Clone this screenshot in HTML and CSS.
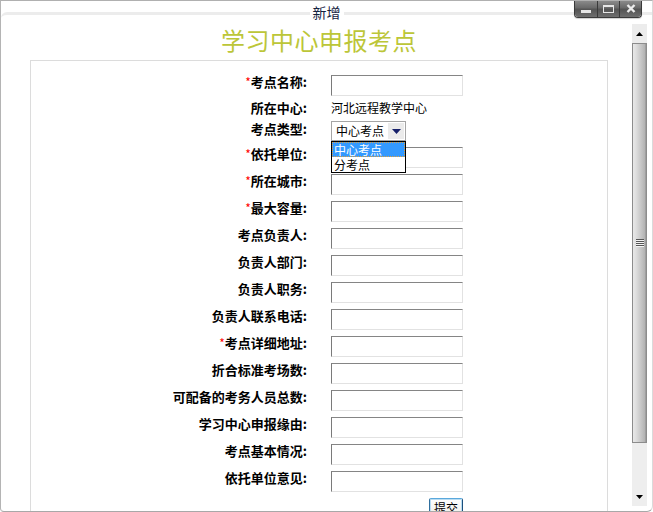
FILE: index.html
```html
<!DOCTYPE html>
<html lang="zh-CN">
<head>
<meta charset="utf-8">
<title>新增</title>
<link rel="stylesheet" href="styles.css">
</head>
<body>
<div class="window">
  <div class="titlebar"><span class="title">新增</span></div>
  <div class="controls">
    <span class="ctl ctl-min"><i class="min-bar"></i></span>
    <span class="ctl ctl-max"><i class="max-box"></i></span>
    <span class="ctl ctl-close"><svg width="10" height="9" viewBox="0 0 10 9"><path d="M1.5 1 L8.5 8 M8.5 1 L1.5 8" stroke="#ececec" stroke-width="2.4" fill="none"/></svg></span>
  </div>
  <div class="frame">
    <div class="content">
      <h1 class="heading">学习中心申报考点</h1>
      <div class="panel">
        <div class="row"><div class="label"><span class="req">*</span>考点名称:</div><div class="field"><span class="input"></span></div></div>
        <div class="row row-text"><div class="label">所在中心:</div><div class="field value">河北远程教学中心</div></div>
        <div class="row row-sel"><div class="label">考点类型:</div>
          <div class="field">
            <div class="select">
              <span class="select-text">中心考点</span>
              <span class="select-btn"><svg width="9" height="5" viewBox="0 0 9 5"><path d="M0 0 H9 L4.5 5 Z" fill="#16206a"/></svg></span>
              <div class="listbox">
                <div class="opt opt-on">中心考点</div>
                <div class="opt">分考点</div>
              </div>
            </div>
          </div>
        </div>
        <div class="row"><div class="label"><span class="req">*</span>依托单位:</div><div class="field"><span class="input"></span></div></div>
        <div class="row"><div class="label"><span class="req">*</span>所在城市:</div><div class="field"><span class="input"></span></div></div>
        <div class="row"><div class="label"><span class="req">*</span>最大容量:</div><div class="field"><span class="input"></span></div></div>
        <div class="row"><div class="label">考点负责人:</div><div class="field"><span class="input"></span></div></div>
        <div class="row"><div class="label">负责人部门:</div><div class="field"><span class="input"></span></div></div>
        <div class="row"><div class="label">负责人职务:</div><div class="field"><span class="input"></span></div></div>
        <div class="row"><div class="label">负责人联系电话:</div><div class="field"><span class="input"></span></div></div>
        <div class="row"><div class="label"><span class="req">*</span>考点详细地址:</div><div class="field"><span class="input"></span></div></div>
        <div class="row"><div class="label">折合标准考场数:</div><div class="field"><span class="input"></span></div></div>
        <div class="row"><div class="label">可配备的考务人员总数:</div><div class="field"><span class="input"></span></div></div>
        <div class="row"><div class="label">学习中心申报缘由:</div><div class="field"><span class="input"></span></div></div>
        <div class="row"><div class="label">考点基本情况:</div><div class="field"><span class="input"></span></div></div>
        <div class="row"><div class="label">依托单位意见:</div><div class="field"><span class="input"></span></div></div>
        <div class="row"><div class="label"></div><div class="field"><div class="btnwrap"><span class="submit">提交</span></div></div></div>
      </div>
    </div>
    <div class="scrollbar">
      <div class="sb-up"><svg width="7" height="4" viewBox="0 0 7 4"><path d="M0 4 H7 L3.5 0 Z" fill="#000"/></svg></div>
      <div class="sb-thumb"><span class="grip"></span></div>
      <div class="sb-track"><svg width="7" height="4" viewBox="0 0 7 4"><path d="M0 0 H7 L3.5 4 Z" fill="#000"/></svg></div>
    </div>
  </div>
</div>
</body>
</html>
```

FILE: styles.css
```css
* { box-sizing: border-box; }
html, body { margin: 0; padding: 0; background: #fff; }
body {
  font-family: "Noto Sans CJK SC", "Liberation Sans", sans-serif;
  font-size: 12px;
  color: #000;
}
.window {
  position: relative;
  width: 653px;
  height: 512px;
  overflow: hidden;
  background: #fff;
  border-top: 1px solid #b0b0b0;
  border-left: 1px solid #b4b4b4;
  border-bottom: 1px solid #a8a8a8;
  border-right: 1px solid #dadada;
  border-bottom-right-radius: 6px;
  border-bottom-left-radius: 4px;
  display: flex;
  flex-direction: column;
}
.titlebar {
  height: 11px;
  flex: none;
  display: flex;
  justify-content: center;
  z-index: 1;
}
.title {
  font-size: 14px;
  line-height: 22px;
  height: 22px;
  color: #15233f;
  background: #fff;
  padding: 0 3px;
}
.controls {
  position: absolute;
  top: -1px;
  right: 10px;
  z-index: 2;
  display: flex;
  border: 1px solid #3a3a3a;
  border-top: none;
  border-radius: 0 0 4px 4px;
  overflow: hidden;
  box-shadow: 0 1px 1px #cfcfcf;
}
.ctl {
  width: 22px;
  height: 17px;
  display: flex;
  align-items: center;
  justify-content: center;
  background: linear-gradient(#8e8e8e, #6a6a6a 45%, #545454 55%, #6e6e6e);
  border-left: 1px solid #3a3a3a;
}
.ctl-min { border-left: none; }
.min-bar {
  display: block;
  width: 10px;
  height: 3px;
  margin-top: 5px;
  background: #e6e6e6;
}
.max-box {
  display: block;
  width: 11px;
  height: 8px;
  border: 1px solid #e6e6e6;
  border-top-width: 2px;
}
.frame {
  flex: 1;
  min-height: 0;
  display: flex;
  border-top: 3px solid #ececec;
  border-top-left-radius: 6px;
}
.content {
  flex: 1;
  min-width: 0;
  padding: 10px 24px 0 29px;
  overflow: hidden;
}
.heading {
  margin: 0 0 5px;
  font-size: 24px;
  line-height: 30px;
  font-weight: normal;
  color: #bcc638;
  text-align: center;
  letter-spacing: 0.5px;
}
.panel {
  border: 1px solid #dcdcdc;
  border-bottom: none;
  padding-top: 11px;
  height: 620px;
}
.row {
  display: grid;
  grid-template-columns: 288px 1fr;
  height: 27px;
}
.label {
  text-align: right;
  padding-right: 12px;
  font-weight: bold;
  font-size: 13px;
  line-height: 20px;
  white-space: nowrap;
}
.req {
  color: #ff0000;
  font-weight: normal;
  font-size: 12px;
}
.field { padding-left: 12px; }
.input {
  display: block;
  width: 132px;
  height: 21px;
  margin-top: 3px;
  background: #fff;
  border: 1px solid;
  border-color: #858585 #e2e2e2 #e2e2e2 #7a7a7a;
}
.row-text { height: 18px; }
.row-text .label { line-height: 18px; }
.value { line-height: 18px; font-size: 12px; }
.row-sel .label { padding-top: 2px; }
.select {
  position: relative;
  width: 75px;
  height: 20px;
  margin-top: 4px;
  border: 1px solid #a5a5a5;
  display: flex;
  align-items: center;
  padding-left: 4px;
  line-height: 18px;
}
.select-btn {
  margin-left: auto;
  margin-right: 1px;
  width: 16px;
  height: 16px;
  background: #ebebeb;
  display: flex;
  align-items: center;
  justify-content: center;
}
.listbox {
  position: absolute;
  left: -1px;
  top: 19px;
  width: 75px;
  border: 1px solid #000;
  background: #fff;
  z-index: 2;
}
.opt {
  height: 15px;
  line-height: 15px;
  padding-left: 2px;
}
.opt-on {
  background: #3399ff;
  color: #fff;
  outline: 1px dotted #e0a040;
  outline-offset: -1px;
}
.btnwrap {
  width: 132px;
  display: flex;
  justify-content: flex-end;
  margin-top: 3px;
}
.submit {
  width: 34px;
  height: 22px;
  line-height: 18px;
  text-align: center;
  font-size: 12px;
  border: 1px solid #1c4f7c;
  border-top-color: #5aa8dc;
  border-left-color: #2f6f9e;
  border-radius: 2px;
  background: linear-gradient(#ffffff, #eceae2);
  box-shadow: inset 0 0 0 1px #b9dcf2;
}
.scrollbar {
  width: 15px;
  flex: none;
  margin: 9px 5px 5px 0;
  display: flex;
  flex-direction: column;
}
.sb-up {
  height: 19px;
  flex: none;
  background: #ececec;
  display: flex;
  align-items: center;
  justify-content: center;
}
.sb-thumb {
  height: 400px;
  flex: none;
  border-top: 1px solid #8c8c8c;
  border-bottom: 1px solid #8c8c8c;
  background: linear-gradient(to right, #8c8c8c 0, #8c8c8c 1px, #e8e8e8 1px, #dedede 4px, #c6c6c6 9px, #b2b2b2 13px, #8c8c8c 14px, #8c8c8c 15px);
  display: flex;
  align-items: center;
  justify-content: center;
}
.grip {
  display: block;
  width: 8px;
  height: 8px;
  background: repeating-linear-gradient(#555 0, #555 1px, #f4f4f4 1px, #f4f4f4 2px);
}
.sb-track {
  flex: 1;
  background: #eeeeee;
  display: flex;
  align-items: flex-end;
  justify-content: center;
  padding-bottom: 7px;
}
```
